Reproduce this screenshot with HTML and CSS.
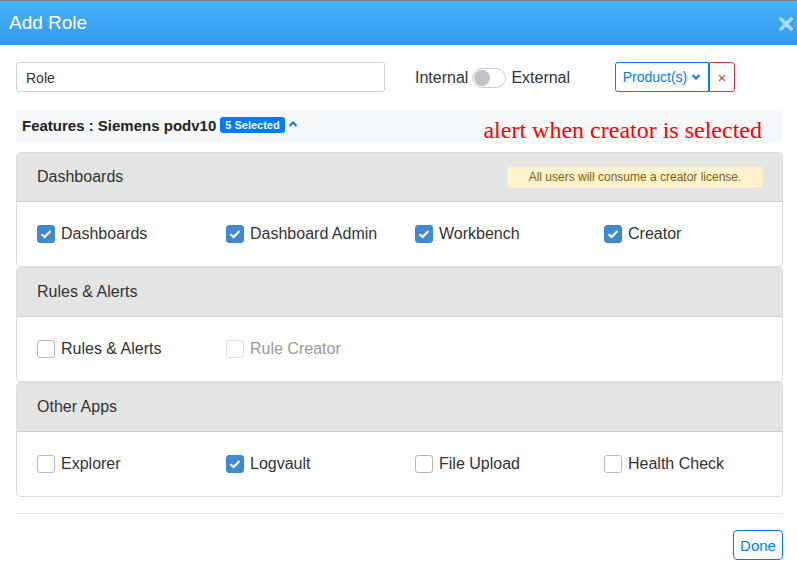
FILE: index.html
```html
<!DOCTYPE html>
<html>
<head>
<meta charset="utf-8">
<link rel="stylesheet" href="styles.css">
</head>
<body>
<div class="modal">
  <div class="modal-header">
    <span class="title">Add Role</span>
    <svg class="close" width="14" height="14" viewBox="0 0 14 14"><path d="M2 2L12 12M12 2L2 12" stroke="#a9dafc" stroke-width="3.6" stroke-linecap="round"/></svg>
  </div>
  <div class="modal-body">
    <div class="top-row">
      <div class="role-input">Role</div>
      <div class="switch-group">
        <span>Internal</span>
        <span class="toggle"><span class="knob"></span></span>
        <span>External</span>
      </div>
      <div class="btn-group">
        <div class="btn-product">Product(s)
          <svg width="10" height="8" viewBox="0 0 10 8"><path d="M1.5 2L5 5.5L8.5 2" fill="none" stroke="#007bff" stroke-width="2"/></svg>
        </div>
        <div class="btn-clear">×</div>
      </div>
    </div>

    <div class="features-bar">
      <span class="features-title">Features : Siemens podv10</span>
      <span class="badge">5 Selected</span>
      <svg class="chev-up" width="10" height="8" viewBox="0 0 10 8"><path d="M1.5 6L5 2.5L8.5 6" fill="none" stroke="#007bff" stroke-width="2"/></svg>
      <span class="note">alert when creator is selected</span>
    </div>

    <div class="panels">
      <div class="panel">
        <div class="panel-head">
          <span>Dashboards</span>
          <span class="alert">All users will consume a creator license.</span>
        </div>
        <div class="panel-body">
          <label class="item"><span class="cb checked"></span>Dashboards</label>
          <label class="item"><span class="cb checked"></span>Dashboard Admin</label>
          <label class="item"><span class="cb checked"></span>Workbench</label>
          <label class="item"><span class="cb checked"></span>Creator</label>
        </div>
      </div>
      <div class="panel">
        <div class="panel-head"><span>Rules &amp; Alerts</span></div>
        <div class="panel-body">
          <label class="item"><span class="cb"></span>Rules &amp; Alerts</label>
          <label class="item disabled"><span class="cb"></span>Rule Creator</label>
        </div>
      </div>
      <div class="panel">
        <div class="panel-head"><span>Other Apps</span></div>
        <div class="panel-body">
          <label class="item"><span class="cb"></span>Explorer</label>
          <label class="item"><span class="cb checked"></span>Logvault</label>
          <label class="item"><span class="cb"></span>File Upload</label>
          <label class="item"><span class="cb"></span>Health Check</label>
        </div>
      </div>
    </div>

    <div class="divider"></div>
    <div class="footer">
      <div class="btn-done">Done</div>
    </div>
  </div>
</div>
</body>
</html>
```

FILE: styles.css
```css
html, body {
  margin: 0;
  padding: 0;
  background: #fff;
}
body {
  font-family: "Liberation Sans", Arial, sans-serif;
  color: #212529;
  width: 797px;
  height: 576px;
  overflow: hidden;
}
.modal {
  border-top: 1px solid #7d7f82;
}
.modal-header {
  height: 44px;
  background: linear-gradient(#46b3fa, #3399ef);
  display: flex;
  align-items: center;
  justify-content: space-between;
  padding: 0 4px 0 9px;
}
.title {
  color: #fff;
  font-size: 19px;
  margin-top: -1px;
}
.close {
  margin-top: 2px;
}
.modal-body {
  padding: 17px 14px 0 16px;
}
.top-row {
  display: flex;
  align-items: center;
  height: 30px;
}
.role-input {
  width: 358px;
  height: 28px;
  border: 1px solid #ccd0d5;
  border-radius: 3px;
  padding-left: 9px;
  font-size: 14px;
  color: #333;
  display: flex;
  align-items: center;
  padding-top: 2px;
  box-sizing: border-box;
  width: 369px;
  height: 30px;
}
.switch-group {
  display: flex;
  align-items: center;
  margin-left: 30px;
  font-size: 16px;
  color: #333;
  width: 200px;
  padding-top: 2px;
}
.toggle {
  width: 31px;
  height: 18px;
  border: 1px solid #ccc;
  border-radius: 10px;
  margin: 0 5px 0 4px;
  display: flex;
  align-items: center;
  padding-left: 1px;
}
.knob {
  width: 16px;
  height: 16px;
  border-radius: 50%;
  background: #bfc2c6;
}
.btn-group {
  display: flex;
  height: 30px;
}
.btn-product {
  width: 92px;
  height: 28px;
  border: 1px solid #007bff;
  border-radius: 3px 0 0 3px;
  color: #007bff;
  font-size: 14px;
  display: flex;
  align-items: center;
  justify-content: center;
  gap: 4px;
}
.btn-clear {
  width: 24px;
  height: 28px;
  border: 1px solid #dc3545;
  border-radius: 0 3px 3px 0;
  color: #dc3545;
  font-size: 15px;
  display: flex;
  align-items: center;
  justify-content: center;
}
.features-bar {
  margin-top: 17px;
  height: 34px;
  width: 767px;
  background: #f7f8fa;
  border-radius: 4px;
  display: flex;
  align-items: center;
  padding-left: 6px;
  box-sizing: border-box;
}
.features-title {
  font-weight: bold;
  font-size: 15px;
  color: #222;
  margin-top: -2px;
}
.badge {
  margin-left: 4px;
  background: #007bff;
  color: #fff;
  font-size: 11px;
  font-weight: bold;
  border-radius: 3px;
  padding: 2px 5px;
  line-height: 12px;
  margin-top: -2px;
}
.chev-up {
  margin-left: 3px;
  margin-top: -4px;
}
.note {
  margin-left: auto;
  margin-right: 21px;
  font-family: "Liberation Serif", "Times New Roman", serif;
  color: #ff0000;
  font-size: 24px;
  margin-top: 8px;
}
.panels {
  margin-top: 9px;
  width: 767px;
}
.panel {
  border: 1px solid #dcdcdc;
  border-radius: 4px;
  overflow: hidden;
}
.panel-head {
  height: 49px;
  background: #e4e4e4;
  border-bottom: 1px solid #cfcfcf;
  display: flex;
  align-items: center;
  justify-content: space-between;
  padding: 0 19px 0 20px;
  font-size: 16px;
  color: #333;
  box-sizing: border-box;
}
.alert {
  background: #fff3cd;
  border: 1px solid #ffeeba;
  color: #7d6010;
  font-size: 12px;
  border-radius: 3px;
  width: 254px;
  height: 19px;
  display: flex;
  align-items: center;
  justify-content: center;
}
.panel-body {
  height: 64px;
  display: grid;
  grid-template-columns: repeat(4, 189px);
  align-items: center;
  padding-left: 20px;
}
.item {
  display: flex;
  align-items: center;
  font-size: 16px;
  color: #333;
}
.item.disabled {
  color: #999;
}
.cb {
  width: 16px;
  height: 16px;
  border: 1px solid #b8b8b8;
  border-radius: 3px;
  margin-right: 6px;
  background: #fff;
}
.item.disabled .cb {
  border-color: #dddddd;
}
.cb.checked {
  border-color: #3f88d0;
  background: #4189d1 url("data:image/svg+xml;utf8,<svg xmlns='http://www.w3.org/2000/svg' width='16' height='16' viewBox='0 0 16 16'><path d='M3.5 8.2L6.6 11L12.5 5' fill='none' stroke='white' stroke-width='2'/></svg>") no-repeat center;
}
.divider {
  margin-top: 16px;
  width: 767px;
  height: 1px;
  background: #e6e6e6;
}
.footer {
  width: 767px;
  display: flex;
  justify-content: flex-end;
  margin-top: 16px;
}
.btn-done {
  width: 48px;
  height: 28px;
  border: 1px solid #007bff;
  border-radius: 4px;
  color: #007bff;
  font-size: 15px;
  display: flex;
  align-items: center;
  justify-content: center;
}
```
